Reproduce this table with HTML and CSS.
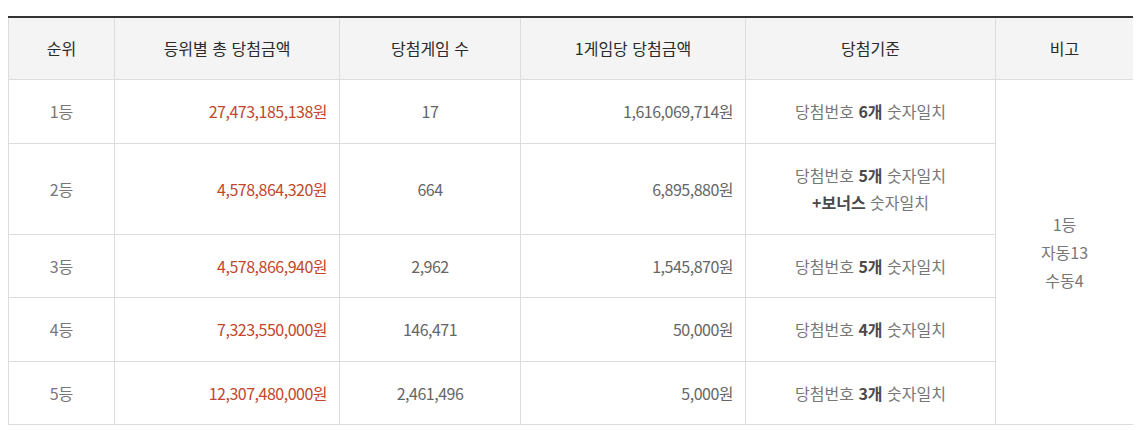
FILE: index.html
```html
<!DOCTYPE html>
<html lang="ko">
<head>
<meta charset="utf-8">
<title>당첨결과</title>
<link rel="stylesheet" href="styles.css">
</head>
<body>
<table class="result">
  <colgroup>
    <col class="c1"><col class="c2"><col class="c3"><col class="c4"><col class="c5"><col class="c6">
  </colgroup>
  <thead>
    <tr>
      <th>순위</th>
      <th>등위별 총 당첨금액</th>
      <th>당첨게임 수</th>
      <th>1게임당 당첨금액</th>
      <th>당첨기준</th>
      <th>비고</th>
    </tr>
  </thead>
  <tbody>
    <tr>
      <td>1등</td>
      <td class="amt red">27,473,185,138원</td>
      <td class="num">17</td>
      <td class="amt">1,616,069,714원</td>
      <td>당첨번호 <strong>6개</strong> 숫자일치</td>
      <td rowspan="5" class="note">1등<br>자동13<br>수동4</td>
    </tr>
    <tr>
      <td>2등</td>
      <td class="amt red">4,578,864,320원</td>
      <td class="num">664</td>
      <td class="amt">6,895,880원</td>
      <td>당첨번호 <strong>5개</strong> 숫자일치<br><strong>+보너스</strong> 숫자일치</td>
    </tr>
    <tr class="short">
      <td>3등</td>
      <td class="amt red">4,578,866,940원</td>
      <td class="num">2,962</td>
      <td class="amt">1,545,870원</td>
      <td>당첨번호 <strong>5개</strong> 숫자일치</td>
    </tr>
    <tr>
      <td>4등</td>
      <td class="amt red">7,323,550,000원</td>
      <td class="num">146,471</td>
      <td class="amt">50,000원</td>
      <td>당첨번호 <strong>4개</strong> 숫자일치</td>
    </tr>
    <tr class="short">
      <td>5등</td>
      <td class="amt red">12,307,480,000원</td>
      <td class="num">2,461,496</td>
      <td class="amt">5,000원</td>
      <td>당첨번호 <strong>3개</strong> 숫자일치</td>
    </tr>
  </tbody>
</table>
</body>
</html>
```

FILE: styles.css
```css
html, body {
  background: #ffffff;
}
body {
  margin: 16px 8px 8px 8px;
  font-family: "Noto Sans CJK KR", "Noto Sans", sans-serif;
  font-size: 16px;
  color: #777;
}
.result {
  width: 1125px;
  border-collapse: collapse;
  table-layout: fixed;
  border-top: 2px solid #333;
  border-left: 1px solid #ddd;
  border-right: 1px solid #ddd;
  border-bottom: 1px solid #ddd;
}
.c1 { width: 106px; }
.c2 { width: 225px; }
.c3 { width: 181px; }
.c4 { width: 225px; }
.c5 { width: 250px; }
.c6 { width: 138px; }
.result th {
  background: #f4f4f4;
  color: #2a2a2a;
  font-weight: 400;
  line-height: 27px;
  padding: 17px 10px;
  border: 1px solid #ddd;
  border-top: 0;
  text-align: center;
}
.result td {
  line-height: 27px;
  padding: 18px 12px;
  border: 1px solid #ddd;
  text-align: center;
}
.result tr.short td {
  padding-bottom: 17px;
}
.result td.amt {
  text-align: right;
  color: #666;
  letter-spacing: -0.5px;
}
.result td.num {
  color: #666;
  letter-spacing: -0.5px;
}
.result td.red {
  color: #c2472d;
}
.result td strong {
  color: #4a4a4a;
  font-weight: 700;
}
.result td.note {
  line-height: 28px;
}
```
